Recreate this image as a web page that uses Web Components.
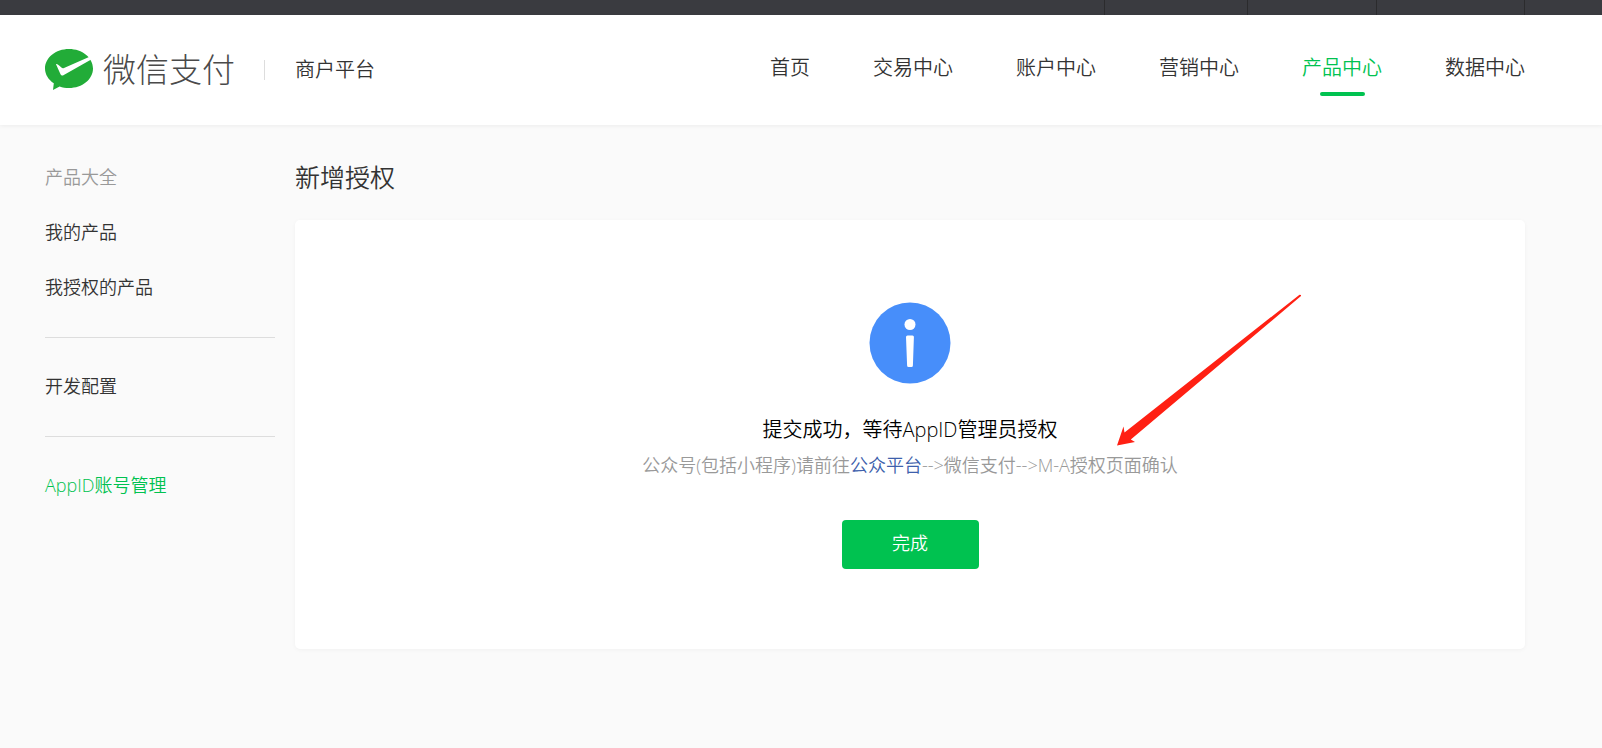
<!DOCTYPE html>
<html lang="zh-CN">
<head>
<meta charset="utf-8">
<title>微信支付 商户平台</title>
<style>
  :root {
    --color-brand: #00c250;
    --color-text: #333;
    --color-muted: #999;
    --page-left: 45px;
    --page-right: 77px;
    --side-width: 250px;
  }

  body {
    margin: 0;
    min-height: 100vh;
    background: #fafafa;
    color: var(--color-text);
    font-family: "Open Sans", "Noto Sans CJK SC", sans-serif;
    font-weight: 350;
  }
</style>
</head>
<body>
<pay-topbar></pay-topbar>

<pay-header>
  <pay-brand slot="brand" name="微信支付">商户平台</pay-brand>
  <pay-nav-item>首页</pay-nav-item>
  <pay-nav-item>交易中心</pay-nav-item>
  <pay-nav-item>账户中心</pay-nav-item>
  <pay-nav-item>营销中心</pay-nav-item>
  <pay-nav-item active>产品中心</pay-nav-item>
  <pay-nav-item>数据中心</pay-nav-item>
</pay-header>

<pay-layout>
  <pay-sidebar slot="side">
    <pay-side-group>
      <pay-side-item muted>产品大全</pay-side-item>
      <pay-side-item>我的产品</pay-side-item>
      <pay-side-item>我授权的产品</pay-side-item>
    </pay-side-group>
    <pay-side-group>
      <pay-side-item>开发配置</pay-side-item>
    </pay-side-group>
    <pay-side-group>
      <pay-side-item active>AppID账号管理</pay-side-item>
    </pay-side-group>
  </pay-sidebar>
  <span slot="title">新增授权</span>
  <pay-result>
    <span slot="title">提交成功，等待AppID管理员授权</span>
    <span>公众号(包括小程序)请前往<pay-link>公众平台</pay-link>--&gt;微信支付--&gt;M-A授权页面确认</span>
    <pay-button slot="action">完成</pay-button>
    <pay-arrow slot="pointer"></pay-arrow>
  </pay-result>
</pay-layout>

<script>
/**
 * Base class: attaches an open shadow root and fills it from render().
 */
class PayElement extends HTMLElement {
  constructor() {
    super();
    this.attachShadow({ mode: "open" });
  }

  connectedCallback() {
    this.shadowRoot.innerHTML = this.render().trim();
  }
}

/** Dark strip at the top of the page, with its column dividers. */
class PayTopbar extends PayElement {
  render() {
    return `
      <style>
        :host {
          display: flex;
          justify-content: flex-end;
          height: 15px;
          padding-right: var(--page-right);
          background: #3a3b40;
        }
        i { box-sizing: border-box; border-right: 1px solid #2b2b2d; }
        .sm { width: 129px; }
        .md { width: 143px; }
        .lg { width: 148px; }
      </style>
      <i></i><i class="md"></i><i class="sm"></i><i class="lg"></i>
    `;
  }
}

/** White header: brand on the left, main navigation on the right. */
class PayHeader extends PayElement {
  render() {
    return `
      <style>
        :host {
          display: block;
          background: #fff;
          box-shadow: 0 1px 4px rgba(0, 0, 0, 0.06);
        }
        header {
          display: flex;
          align-items: center;
          justify-content: space-between;
          height: 110px;
          padding: 0 var(--page-right) 0 var(--page-left);
        }
        nav { display: flex; gap: 63px; }
      </style>
      <header>
        <slot name="brand"></slot>
        <nav><slot></slot></nav>
      </header>
    `;
  }
}

/** Logo, product name and platform name. */
class PayBrand extends PayElement {
  render() {
    return `
      <style>
        :host { display: flex; align-items: center; padding-bottom: 1px; white-space: nowrap; }
        svg { width: 48px; height: 41px; margin-right: 10px; }
        b { color: #4a4a4a; font-size: 33px; line-height: 40px; font-weight: 300; }
        i { width: 1px; height: 20px; margin: 0 30px 0 29px; background: #ddd; }
        span { font-size: 20px; line-height: 24px; }
      </style>
      <svg viewBox="0 0 48 41" aria-hidden="true">
        <path fill="#22ac38" d="M24 0C37.300 0 48 8.700 48 19.500S37.300 39 24 39c-3.400 0-6.500-.5-9.400-1.500L8 41l.8-6.700C3.500 30.800 0 25.500 0 19.500 0 8.700 10.700 0 24 0z"/>
        <path fill="#fff" d="M11 15.300c.8-.6 1.300-.4 5.400 3.200.8.7 1.600.9 2.600.4L44 7.900l2.200 2.600L18.800 26c-1.500.9-2.700.6-3.300-.8z"/>
      </svg>
      <b>${this.getAttribute("name")}</b><i></i><span><slot></slot></span>
    `;
  }
}

/** One entry of the main navigation. */
class PayNavItem extends PayElement {
  render() {
    return `
      <style>
        :host { display: block; padding-bottom: 4px; }
        a {
          position: relative;
          display: block;
          color: inherit;
          font-size: 20px;
          line-height: 24px;
          text-decoration: none;
          white-space: nowrap;
        }
        :host([active]) a { color: var(--color-brand); }
        :host([active]) a::after {
          content: "";
          position: absolute;
          top: 36px;
          left: 50%;
          width: 45px;
          height: 4px;
          margin-left: -22px;
          border-radius: 2px;
          background: var(--color-brand);
        }
      </style>
      <a href="#"><slot></slot></a>
    `;
  }
}

/** Page body: side column, then the page title over its content. */
class PayLayout extends PayElement {
  render() {
    return `
      <style>
        :host {
          display: grid;
          grid-template-columns: var(--side-width) 1fr;
          padding: 25px var(--page-right) 40px var(--page-left);
        }
        h1 {
          margin: 7px 0 23px;
          font-size: 25px;
          line-height: 40px;
          font-weight: inherit;
        }
      </style>
      <slot name="side"></slot>
      <main>
        <h1><slot name="title"></slot></h1>
        <slot></slot>
      </main>
    `;
  }
}

/** Side menu column. */
class PaySidebar extends PayElement {
  render() {
    return `
      <style>
        :host { display: block; padding-right: 20px; }
      </style>
      <nav><slot></slot></nav>
    `;
  }
}

/** Group of side menu entries, ruled off from the next group. */
class PaySideGroup extends PayElement {
  render() {
    return `
      <style>
        :host {
          display: block;
          margin-bottom: 21px;
          padding-bottom: 22px;
          border-bottom: 1px solid #ddd;
        }
        :host(:last-of-type) { border-bottom: 0; }
      </style>
      <slot></slot>
    `;
  }
}

/** Side menu entry. */
class PaySideItem extends PayElement {
  render() {
    return `
      <style>
        :host { display: block; }
        a {
          display: block;
          color: inherit;
          font-size: 18px;
          line-height: 55px;
          text-decoration: none;
        }
        :host([muted]) a { color: var(--color-muted); }
        :host([active]) a { color: var(--color-brand); }
      </style>
      <a href="#"><slot></slot></a>
    `;
  }
}

/** Result card: icon, title, hint and action. */
class PayResult extends PayElement {
  render() {
    return `
      <style>
        :host {
          position: relative;
          display: flex;
          flex-direction: column;
          align-items: center;
          padding: 82px 20px 80px;
          border-radius: 5px;
          background: #fff;
          box-shadow: 0 1px 4px rgba(0, 0, 0, 0.04);
        }
        svg { width: 82px; height: 82px; }
        h2 {
          margin: 31px 0 0;
          color: #000;
          font-size: 20px;
          line-height: 30px;
          font-weight: inherit;
        }
        p {
          margin: 4px 0 39px;
          color: var(--color-muted);
          font-size: 18px;
          line-height: 32px;
        }
      </style>
      <svg viewBox="0 0 82 82" aria-hidden="true">
        <circle cx="41" cy="41" r="40.500" fill="#478efa"/>
        <circle cx="41" cy="22.500" r="5.500" fill="#fff"/>
        <path fill="#fff" d="M38.500 33.500h5q1.500 0 1.400 1.500l-1 28.500q0 1.500-1.500 1.500h-2.800q-1.500 0-1.500-1.500L37 35q0-1.500 1.500-1.500z"/>
      </svg>
      <h2><slot name="title"></slot></h2>
      <p><slot></slot></p>
      <slot name="action"></slot>
      <slot name="pointer"></slot>
    `;
  }
}

/** Inline link. No whitespace in the markup, so the text runs on around it. */
class PayLink extends PayElement {
  render() {
    return `<style>:host { display: inline; } a { color: #3e5fac; text-decoration: none; }</style><a href="#"><slot></slot></a>`;
  }
}

/** Primary button. */
class PayButton extends PayElement {
  render() {
    return `
      <style>
        :host { display: block; }
        button {
          display: block;
          min-width: 137px;
          padding: 10px 20px 13px;
          border: 0;
          border-radius: 4px;
          background: var(--color-brand);
          color: #fff;
          font: inherit;
          font-size: 18px;
          line-height: 26px;
          cursor: pointer;
        }
      </style>
      <button type="button"><slot></slot></button>
    `;
  }
}

/** Red arrow drawn over the card, pointing at the hint. */
class PayArrow extends PayElement {
  render() {
    return `
      <style>
        :host {
          position: absolute;
          top: 74px;
          left: calc(50% + 206px);
          width: 186px;
          height: 152px;
          pointer-events: none;
        }
        svg { display: block; }
      </style>
      <svg width="186" height="152" viewBox="0 0 186 152" aria-hidden="true">
        <path fill="#ff2013" d="M185 1L183.500 .7 8.500 138.500 7.500 132.500 1 151.500 19 148 14.800 145.500 185 2z"/>
      </svg>
    `;
  }
}

customElements.define("pay-topbar", PayTopbar);
customElements.define("pay-header", PayHeader);
customElements.define("pay-brand", PayBrand);
customElements.define("pay-nav-item", PayNavItem);
customElements.define("pay-layout", PayLayout);
customElements.define("pay-sidebar", PaySidebar);
customElements.define("pay-side-group", PaySideGroup);
customElements.define("pay-side-item", PaySideItem);
customElements.define("pay-result", PayResult);
customElements.define("pay-link", PayLink);
customElements.define("pay-button", PayButton);
customElements.define("pay-arrow", PayArrow);
</script>
</body>
</html>
